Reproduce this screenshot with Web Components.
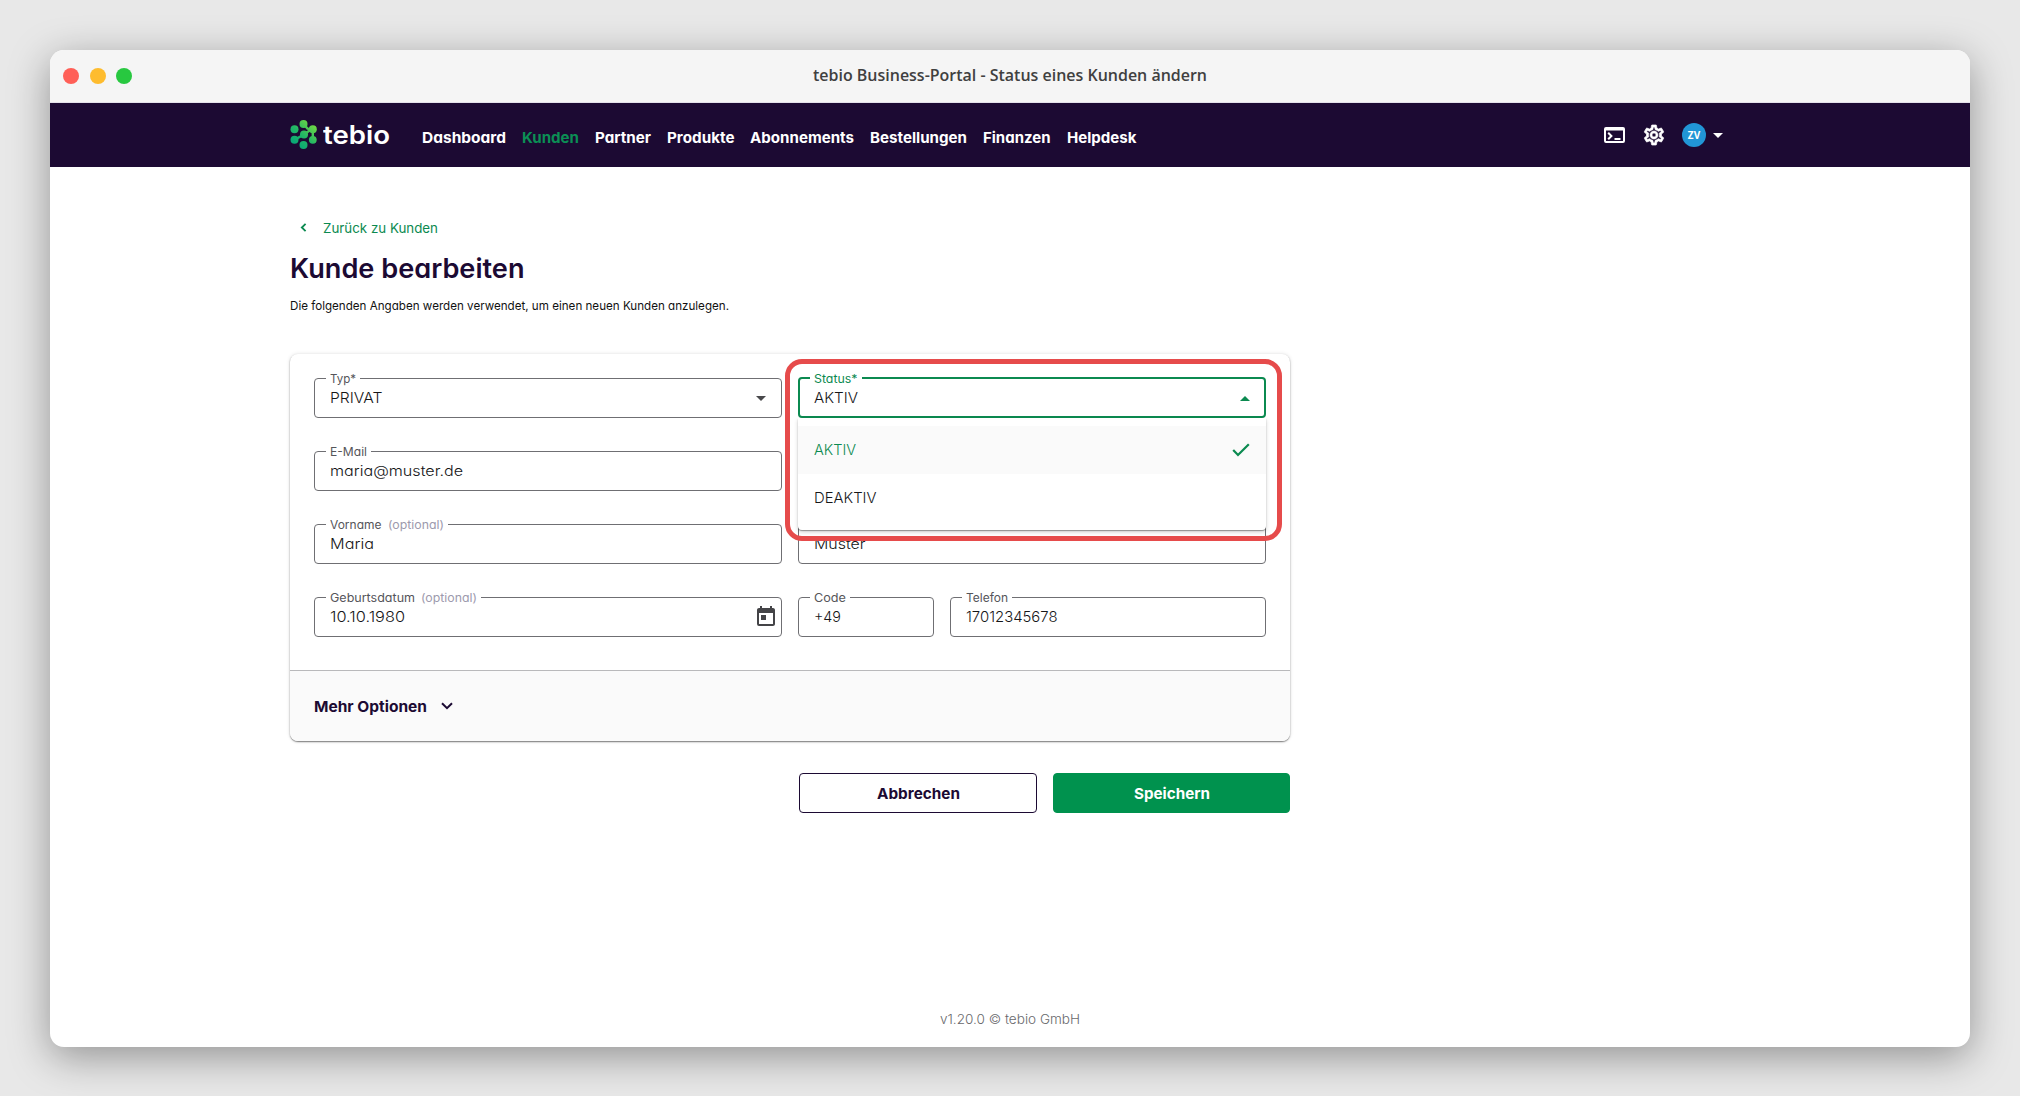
<!DOCTYPE html>
<html lang="de">
<head>
<meta charset="utf-8">
<title>tebio Business-Portal</title>
<style>
html,body{margin:0;height:100%}
body{background:#e8e8e8;font-family:Inter,"Open Sans",sans-serif;font-feature-settings:"cv11";overflow:hidden;box-sizing:border-box;padding:50px 50px 49px}
</style>
</head>
<body>
<app-window heading="tebio Business-Portal - Status eines Kunden ändern">
  <top-nav slot="nav"></top-nav>
  <edit-page></edit-page>
</app-window>
<script>
const define = (name, html, init) => {
  const t = document.createElement('template');
  t.innerHTML = html;
  customElements.define(name, class extends HTMLElement {
    constructor() {
      super();
      this.attachShadow({ mode: 'open' });
    }
    connectedCallback() {
      if (this.shadowRoot.childNodes.length) return;
      this.shadowRoot.append(t.content.cloneNode(true));
      if (init) init.call(this, this.shadowRoot);
    }
  });
};

/* Line of text widened or narrowed to a fixed measure (attribute w, in px) */
define('fit-text', `<style>
  :host{display:block;white-space:nowrap;flex:none}
  span{display:inline-block;transform-origin:0 50%}
</style><span><slot></slot></span>`, function (r) {
  const w = +this.getAttribute('w');
  const s = r.querySelector('span');
  this.style.width = w + 'px';
  const nat = s.getBoundingClientRect().width;
  s.style.transform = 'scaleX(' + (w / nat) + ')';
});

define('app-window', `<style>
  :host{display:flex;flex-direction:column;height:100%;border-radius:14px;overflow:hidden;background:#fff;box-shadow:0 10px 40px rgba(0,0,0,.37)}
  header{height:52px;flex:none;background:#f5f5f5;border-bottom:1px solid #e4e2ea;display:flex;align-items:center;padding:0 13px;color:#404040}
  .dots{display:flex;gap:10.5px;width:200px}
  i{width:16px;height:16px;border-radius:50%;background:#ff5f57}
  i:nth-child(2){background:#febc2e} i:nth-child(3){background:#28c840}
  h1{flex:1;margin:0;display:flex;justify-content:center;font:600 16px/22px "Open Sans",sans-serif;padding-bottom:2px}
  .pad{width:200px}
</style>
<header><div class="dots"><i></i><i></i><i></i></div><h1></h1><div class="pad"></div></header>
<slot name="nav"></slot><slot></slot>`, function (r) {
  const f = document.createElement('fit-text');
  f.setAttribute('w', '394');
  f.textContent = this.getAttribute('heading');
  r.querySelector('h1').append(f);
});

define('brand-logo', `<style>
  :host{display:flex;align-items:center;gap:4.5px;color:#fff;font-weight:600;font-size:25.5px;line-height:30px}
  svg{display:block}
  fit-text{margin-top:-1px}
</style>
<svg width="28" height="32" viewBox="0 0 28 32">
  <defs><linearGradient id="g" x1="4" y1="28" x2="24" y2="6" gradientUnits="userSpaceOnUse"><stop stop-color="#04a57a"/><stop offset=".5" stop-color="#22b765"/><stop offset="1" stop-color="#6fd644"/></linearGradient></defs>
  <g fill="url(#g)"><circle cx="13.5" cy="5" r="4"/><circle cx="4.5" cy="10.3" r="4"/><circle cx="4.5" cy="20.8" r="4"/><circle cx="13.5" cy="26" r="4"/><circle cx="22.8" cy="20.8" r="3.9"/><circle cx="22.8" cy="10.3" r="4"/><circle cx="14" cy="15.6" r="4"/></g>
  <path d="M13.5 5L17.5 9.6 22.8 10.3M14 15.6L20.5 10.8M22.8 10.3V20.8M4.5 20.8L14 15.6" fill="none" stroke="url(#g)" stroke-width="2.4"/>
</svg><fit-text w="67">tebio</fit-text>`);

define('nav-link', `<style>
  :host{display:block;color:#fff;font-weight:700;font-size:15px;line-height:20px}
  :host([active]){color:#0b8f55}
</style><fit-text></fit-text>`, function (r) {
  const f = r.querySelector('fit-text');
  const n = document.createElement('fit-text');
  n.setAttribute('w', this.getAttribute('w'));
  n.textContent = this.getAttribute('label');
  f.replaceWith(n);
});

define('top-nav', `<style>
  :host{display:flex;height:64px;flex:none;background:#1c0a33;padding:0 247px 0 240px;align-items:center}
  nav{display:flex;gap:16px;margin-left:32px;padding-top:6px;flex:1}
  .tools{display:flex;align-items:center;color:#fff}
  svg{display:block}
  .av{width:24px;height:24px;border-radius:50%;background:#2196d6;font:700 10px/24px "Open Sans",sans-serif;text-align:center;margin:0 7px 0 16px}
</style>
<brand-logo></brand-logo>
<nav>
 <nav-link w="84" label="Dashboard"></nav-link><nav-link w="57" label="Kunden" active></nav-link><nav-link w="56" label="Partner"></nav-link><nav-link w="67.5" label="Produkte"></nav-link><nav-link w="104" label="Abonnements"></nav-link><nav-link w="97" label="Bestellungen"></nav-link><nav-link w="67.5" label="Finanzen"></nav-link><nav-link w="69.5" label="Helpdesk"></nav-link>
</nav>
<div class="tools">
 <svg width="21" height="16" viewBox="0 0 21 16" fill="none" stroke="#fff" stroke-width="2"><rect x="1" y="1" width="19" height="14" rx="1"/><path d="M1 2.2H20" stroke-width="2.6"/><path d="M4.2 5.8L7.4 9 4.2 12.2M10.5 12H16.5"/></svg>
 <svg style="margin-left:17px" width="24" height="24" viewBox="0 0 24 24" fill="#fff"><path d="M19.43 12.98c.04-.32.07-.64.07-.98s-.03-.66-.07-.98l2.11-1.65c.19-.15.24-.42.12-.64l-2-3.46a.5.5 0 0 0-.61-.22l-2.49 1c-.52-.4-1.08-.73-1.69-.98l-.38-2.65A.488.488 0 0 0 14 2h-4c-.25 0-.46.18-.49.42l-.38 2.65c-.61.25-1.17.59-1.69.98l-2.49-1a.5.5 0 0 0-.61.22l-2 3.46c-.13.22-.07.49.12.64l2.11 1.65c-.04.32-.07.65-.07.98s.03.66.07.98l-2.11 1.65c-.19.15-.24.42-.12.64l2 3.46c.12.22.39.3.61.22l2.49-1c.52.4 1.08.73 1.69.98l.38 2.65c.03.24.24.42.49.42h4c.25 0 .46-.18.49-.42l.38-2.65c.61-.25 1.17-.59 1.69-.98l2.49 1c.23.09.49 0 .61-.22l2-3.46c.12-.22.07-.49-.12-.64l-2.11-1.65zm-1.98-1.71c.04.31.05.52.05.73s-.02.43-.05.73l-.14 1.13.89.7 1.08.84-.7 1.21-1.27-.51-1.04-.42-.9.68c-.43.32-.84.56-1.25.73l-1.06.43-.16 1.13-.2 1.35h-1.4l-.19-1.35-.16-1.13-1.06-.43c-.43-.18-.83-.41-1.23-.71l-.91-.7-1.06.43-1.27.51-.7-1.21 1.08-.84.89-.7-.14-1.13c-.03-.31-.05-.54-.05-.74s.02-.43.05-.73l.14-1.13-.89-.7-1.08-.84.7-1.21 1.27.51 1.04.42.9-.68c.43-.32.84-.56 1.25-.73l1.06-.43.16-1.13.2-1.35h1.39l.19 1.35.16 1.13 1.06.43c.43.18.83.41 1.23.71l.91.7 1.06-.43 1.27-.51.7 1.21-1.07.85-.89.7.14 1.13zM12 8c-2.21 0-4 1.79-4 4s1.79 4 4 4 4-1.79 4-4-1.79-4-4-4zm0 6c-1.1 0-2-.9-2-2s.9-2 2-2 2 .9 2 2-.9 2-2 2z" stroke="#fff" stroke-width=".7"/></svg>
 <div class="av">ZV</div>
 <svg width="10" height="5" viewBox="0 0 10 5"><path d="M0 0H10L5 5Z" fill="#fff"/></svg>
</div>`);

/* Outlined form field: notched label, value, trailing icon slot */
define('form-field', `<style>
  :host{display:block;position:relative;height:40px;box-sizing:border-box;--line:#6f6f73;--bw:1px;min-width:0}
  :host([open]){--line:#0b8a50;--bw:2px}
  fieldset{position:absolute;inset:-8px 0 0 0;margin:0;padding:0 0 0 11px;border:var(--bw) solid var(--line);border-radius:4px;min-width:0}
  :host([open]) fieldset{padding-left:10px}
  legend{padding:0 4px;height:16px;line-height:18px;font-size:11.5px;color:#55555a;display:flex;gap:6px}
  :host([open]) legend{color:#0b8a50}
  legend .opt{color:#9d9aad}
  .v{display:flex;align-items:center;height:40px;padding:0 16px;font-size:14.5px;color:#161618;font-weight:300;line-height:20px}
  .v fit-text{margin-top:-1px}
  ::slotted(svg){display:block}
  .end{margin-left:auto}
</style><fieldset><legend></legend></fieldset><div class="v"><div class="end"><slot></slot></div></div>`, function (r) {
  const mk = (t, w, c) => {
    const f = document.createElement('fit-text');
    f.setAttribute('w', w); f.textContent = t; if (c) f.className = c; return f;
  };
  const g = n => this.getAttribute(n);
  const l = r.querySelector('legend');
  l.append(mk(g('label'), g('lw')));
  if (this.hasAttribute('optional')) l.append(mk('(optional)', 56, 'opt'));
  r.querySelector('.v').prepend(mk(g('value'), g('vw')));
});

define('option-menu', `<style>
  :host{display:block;box-sizing:border-box;height:112px;padding:8px 0;background:#fff;border-radius:0 0 4px 4px;box-shadow:0 1px 1px rgba(0,0,0,.35),0 2px 4px rgba(0,0,0,.18);font-size:14.5px;font-weight:300;color:#161618}
  div{height:48px;display:flex;align-items:center;justify-content:space-between;padding:0 16px;line-height:20px}
  div fit-text{margin-top:-1px}
  .on{background:#fafafa;color:#0b8a50}
</style>
<div class="on"><fit-text w="42">AKTIV</fit-text><svg width="18" height="14" viewBox="0 0 18 14"><path d="M1.2 7L6 12 16.8 1.2" fill="none" stroke="#0b8a50" stroke-width="2.2"/></svg></div>
<div><fit-text w="62.5">DEAKTIV</fit-text></div>`);

define('app-button', `<style>
  :host{display:flex;width:238px;height:40px;box-sizing:border-box;border:1px solid #1c0a33;border-radius:4px;align-items:center;justify-content:center;font-weight:700;font-size:15px;line-height:20px;color:#1c0a33;background:#fff;padding-top:1px}
  :host([primary]){width:237px;background:#00924e;border-color:#00924e;color:#fff}
</style><slot></slot>`);

define('customer-card', `<style>
  :host{display:block;width:1000px;border-radius:8px;background:#fff;position:relative;box-shadow:0 1px 1.5px rgba(0,0,0,.5),0 0 4px rgba(0,0,0,.11)}
  .grid{display:grid;grid-template-columns:468px 468px;gap:33px 16px;padding:24px 24px 33px}
  .phone{display:grid;grid-template-columns:136px 316px;gap:16px}
  .more{height:71px;box-sizing:border-box;border-top:1px solid #b9b9bb;background:#fafafa;border-radius:0 0 8px 8px;display:flex;align-items:center;gap:14px;padding:1px 24px 0;font-weight:700;font-size:15px;line-height:20px;color:#1c0a33}
  .more svg{margin-top:-2px}
  option-menu{position:absolute;left:508px;top:64px;width:468px}
  .mark{position:absolute;left:495px;top:5px;width:497px;height:182px;box-sizing:border-box;border:5px solid #e64b4b;border-radius:17px}
</style>
<div class="grid">
 <form-field label="Typ*" lw="26" value="PRIVAT" vw="52.5"><svg width="10" height="5" viewBox="0 0 10 5"><path d="M0 0H10L5 5Z" fill="#48484b"/></svg></form-field>
 <form-field open label="Status*" lw="43.5" value="AKTIV" vw="44"><svg width="10" height="5" viewBox="0 0 10 5"><path d="M0 5H10L5 0Z" fill="#0b8a50"/></svg></form-field>
 <form-field label="E-Mail" lw="37" value="maria@muster.de" vw="133"></form-field>
 <div></div>
 <form-field label="Vorname" lw="51.5" optional value="Maria" vw="44"></form-field>
 <form-field label="Nachname" lw="62" value="Muster" vw="51.5"></form-field>
 <form-field label="Geburtsdatum" lw="85" optional value="10.10.1980" vw="75"><svg style="margin-right:-12px" width="24" height="24" viewBox="0 0 24 24"><path fill="#444447" d="M19 3h-1V1h-2v2H8V1H6v2H5c-1.11 0-1.99.9-1.99 2L3 19a2 2 0 0 0 2 2h14c1.1 0 2-.9 2-2V5c0-1.1-.9-2-2-2zm0 16H5V8h14v11zM7 10h5v5H7z"/></svg></form-field>
 <div class="phone"><form-field label="Code" lw="32" value="+49" vw="27"></form-field><form-field label="Telefon" lw="42" value="17012345678" vw="91.5"></form-field></div>
</div>
<div class="more"><fit-text w="113">Mehr Optionen</fit-text><svg width="12" height="8" viewBox="0 0 12 8"><path d="M1 1.2L6 6.2 11 1.2" fill="none" stroke="#1c0a33" stroke-width="2"/></svg></div>
<option-menu></option-menu>
<div class="mark"></div>`);

define('edit-page', `<style>
  :host{display:flex;flex-direction:column;flex:1;padding:51px 240px 0;color:#1c0a33}
  .back{display:flex;align-items:center;gap:16px;padding-left:10px;height:20px;color:#0b8a50;font-size:13.3px;line-height:20px}
  .back svg{margin-top:-2px}
  h2{margin:13px 0 0;font-size:27px;line-height:36px;font-weight:600}
  p{margin:11px 0 0;font-size:12px;line-height:16px;color:#111}
  customer-card{margin-top:40px}
  .act{display:flex;gap:16px;width:1000px;justify-content:flex-end;margin-top:32px}
  footer{margin-top:auto;padding-bottom:18px;display:flex;justify-content:center;font-size:13px;line-height:20px;color:#69696c;font-weight:300}
</style>
<div class="back"><svg width="7" height="9" viewBox="0 0 7 9"><path d="M5.6 .8L1.8 4.5 5.6 8.2" fill="none" stroke="#0b8a50" stroke-width="1.8"/></svg><fit-text w="115">Zurück zu Kunden</fit-text></div>
<h2><fit-text w="234.5">Kunde bearbeiten</fit-text></h2>
<p><fit-text w="439">Die folgenden Angaben werden verwendet, um einen neuen Kunden anzulegen.</fit-text></p>
<customer-card></customer-card>
<div class="act"><app-button><fit-text w="83">Abbrechen</fit-text></app-button><app-button primary><fit-text w="76">Speichern</fit-text></app-button></div>
<footer><fit-text w="140">v1.20.0 © tebio GmbH</fit-text></footer>`);
</script>
</body>
</html>
